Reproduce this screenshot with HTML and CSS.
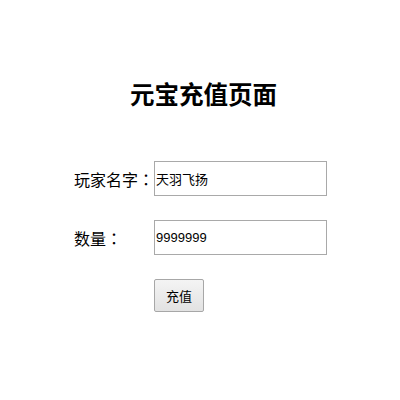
FILE: index.html
```html
<!DOCTYPE html>
<html lang="zh-CN">
<head>
<meta charset="utf-8">
<title>元宝充值页面</title>
<link rel="stylesheet" href="styles.css">
</head>
<body>
<main class="page">
  <h1 class="title">元宝充值页面</h1>
  <form class="form">
    <label class="label" for="player">玩家名字<span class="colon" lang="zh-TW">：</span></label>
    <input class="field" id="player" type="text" value="天羽飞扬">
    <label class="label" for="amount">数量<span class="colon" lang="zh-TW">：</span></label>
    <input class="field" id="amount" type="text" value="9999999">
    <button class="submit" type="button">充值</button>
  </form>
</main>
</body>
</html>
```
FILE: styles.css
```css
html, body {
  margin: 0;
  padding: 0;
  background: #fff;
}
.page {
  width: 400px;
  font-family: "Noto Sans CJK SC", "Liberation Sans", sans-serif;
  color: #000;
}
.title {
  margin: 0;
  padding: 81px 0 0 7px;
  font-size: 24.5px;
  line-height: 26px;
  font-weight: bold;
  text-align: center;
}
.form {
  display: grid;
  grid-template-columns: 80px 173px;
  row-gap: 24px;
  align-items: center;
  margin: 54px 0 0 74px;
}
.label {
  font-size: 16px;
  line-height: 20px;
  white-space: nowrap;
}
.colon {
  font-family: "Noto Sans CJK TC", "Noto Sans CJK SC", sans-serif;
}
.field {
  box-sizing: border-box;
  width: 173px;
  height: 35px;
  margin: 0;
  padding: 0 0 0 1px;
  border: 1px solid #a9a9a9;
  font-family: "Liberation Sans", "Noto Sans CJK SC", sans-serif;
  font-size: 13px;
  color: #000;
  background: #fff;
  outline: none;
}
.submit {
  grid-column: 2;
  justify-self: start;
  box-sizing: border-box;
  width: 50px;
  height: 33px;
  margin: 0;
  padding: 0;
  border: 1px solid #a7a7a7;
  border-radius: 2px;
  background: linear-gradient(#f4f4f4, #e2e2e2);
  font-family: "Noto Sans CJK SC", sans-serif;
  font-size: 13px;
  color: #000;
}
```
